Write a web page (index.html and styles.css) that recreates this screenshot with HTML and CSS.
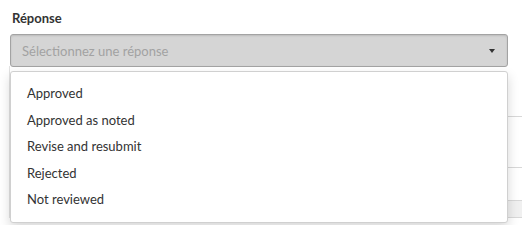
FILE: index.html
```html
<!DOCTYPE html>
<html lang="fr">
<head>
<meta charset="utf-8">
<link rel="stylesheet" href="styles.css">
</head>
<body>
<div class="field">
  <label class="label">Réponse</label>
  <div class="select-wrap">
    <div class="select">
      <span class="placeholder">Sélectionnez une réponse</span>
      <span class="caret"></span>
    </div>
    <ul class="menu">
      <li>Approved</li>
      <li>Approved as noted</li>
      <li>Revise and resubmit</li>
      <li>Rejected</li>
      <li>Not reviewed</li>
    </ul>
  </div>
  <div class="table">
    <div class="row r1"></div>
    <div class="row r2"></div>
    <div class="row r3"></div>
    <div class="row r4"></div>
  </div>
</div>
</body>
</html>
```
FILE: styles.css
```css
* { box-sizing: border-box; }
html, body { margin: 0; padding: 0; background: #fff; }
body {
  font-family: Lato, "Liberation Sans", sans-serif;
  font-size: 13px;
  color: #333;
  overflow: hidden;
  height: 225px;
}
.field { padding: 10px 14px 0 10px; position: relative; }
.label {
  display: block;
  font-weight: 700;
  font-size: 13px;
  line-height: 16px;
  margin: 0 0 8px 2px;
  color: #333;
}
.select-wrap { position: relative; width: 498px; }
.select {
  height: 33px;
  background: #d5d5d5;
  border: 1px solid #a3a3a3;
  border-radius: 3px;
  box-shadow: inset 0 1px 2px rgba(0,0,0,.12);
  display: flex;
  align-items: center;
  justify-content: space-between;
  padding: 0 12px 0 11px;
}
.placeholder { color: #a2a2a2; font-size: 13px; }
.caret {
  width: 0; height: 0;
  border-left: 3.5px solid transparent;
  border-right: 3.5px solid transparent;
  border-top: 4px solid #333;
  margin-right: 0px;
}
.menu {
  position: absolute;
  z-index: 2;
  top: 37px;
  left: 0;
  right: 0;
  margin: 0;
  list-style: none;
  background: #fff;
  border: 1px solid #d0d0d0;
  border-radius: 3px;
  box-shadow: 0 5px 12px rgba(0,0,0,.16);
  padding: 8px 0 9px;
}
.menu li {
  height: 26.5px;
  line-height: 26.5px;
  padding-left: 16px;
  color: #333;
  font-size: 13px;
}
.table {
  margin: 0 -14px 0 -1px;
  border-left: 1px solid #e2e2e2;
}
.row { border-bottom: 1px solid #d8d8d8; }
.r1 { height: 51px; margin-top: -1px; }
.r2 { height: 51px; }
.r3 { height: 33px; }
.r4 { height: 17px; background: #f0f0f0; }
```
